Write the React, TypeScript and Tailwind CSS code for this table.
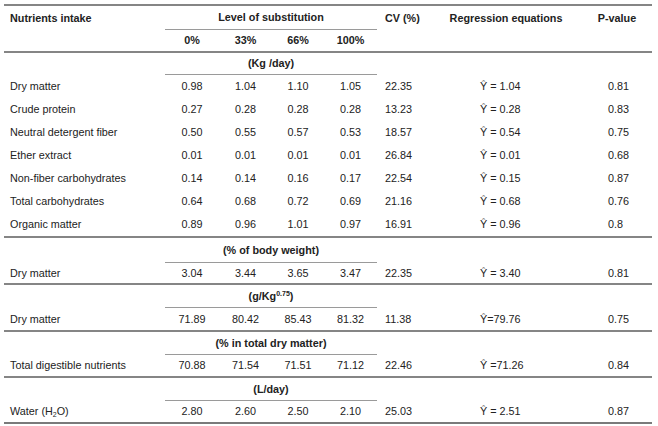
import React from "react";

const font = { fontFamily: '"Liberation Sans", Arial, sans-serif' };

type Row = [string | React.ReactNode, string, string, string, string, string, string, string];

const kgRows: Row[] = [
  ["Dry matter", "0.98", "1.04", "1.10", "1.05", "22.35", "Ŷ = 1.04", "0.81"],
  ["Crude protein", "0.27", "0.28", "0.28", "0.28", "13.23", "Ŷ = 0.28", "0.83"],
  ["Neutral detergent fiber", "0.50", "0.55", "0.57", "0.53", "18.57", "Ŷ = 0.54", "0.75"],
  ["Ether extract", "0.01", "0.01", "0.01", "0.01", "26.84", "Ŷ = 0.01", "0.68"],
  ["Non-fiber carbohydrates", "0.14", "0.14", "0.16", "0.17", "22.54", "Ŷ = 0.15", "0.87"],
  ["Total carbohydrates", "0.64", "0.68", "0.72", "0.69", "21.16", "Ŷ = 0.68", "0.76"],
  ["Organic matter", "0.89", "0.96", "1.01", "0.97", "16.91", "Ŷ = 0.96", "0.8"],
];

function DataRow({ r, cls }: { r: Row; cls: string }) {
  return (
    <div className={`flex items-center ${cls}`}>
      <div className="w-[161px] pl-[6px]">{r[0]}</div>
      <div className="w-[54px] text-center">{r[1]}</div>
      <div className="w-[53px] text-center">{r[2]}</div>
      <div className="w-[52px] text-center">{r[3]}</div>
      <div className="w-[53px] text-center">{r[4]}</div>
      <div className="w-[53px] pl-[8px]">{r[5]}</div>
      <div className="w-[152px] pl-[50px] whitespace-pre">{r[6]}</div>
      <div className="w-[70px] pl-[26px]">{r[7]}</div>
    </div>
  );
}

function UnitRow({ children, cls }: { children: React.ReactNode; cls: string }) {
  return (
    <div className={`flex items-stretch ${cls}`}>
      <div className="w-[161px]" />
      <div className="w-[212px] flex items-center justify-center font-bold border-b border-[#9a9a9a]">
        {children}
      </div>
      <div className="flex-1" />
    </div>
  );
}

export default function App() {
  return (
    <div className="w-[658px] h-[426px] bg-white px-[4px] pt-[4px] text-[10.8px] leading-none text-[#222]" style={font}>
      <div className="w-[648px]">
        {/* header row 1 */}
        <div className="flex items-stretch h-[26px] border-t-2 border-[#858585] font-bold">
          <div className="w-[161px] pl-[6px] flex items-center">Nutrients intake</div>
          <div className="w-[212px] flex items-center justify-center border-b border-[#9a9a9a]">Level of substitution</div>
          <div className="w-[53px] pl-[8px] flex items-center">CV (%)</div>
          <div className="w-[152px] flex items-center justify-center">Regression equations</div>
          <div className="w-[70px] flex items-center justify-center">P-value</div>
        </div>
        {/* header row 2 */}
        <div className="flex items-center h-[23px] border-b-2 border-[#858585] font-bold">
          <div className="w-[161px]" />
          <div className="w-[54px] text-center">0%</div>
          <div className="w-[53px] text-center">33%</div>
          <div className="w-[52px] text-center">66%</div>
          <div className="w-[53px] text-center">100%</div>
        </div>
        <UnitRow cls="h-[22px]">(Kg /day)</UnitRow>
        {kgRows.map((r, i) => (
          <DataRow
            key={i}
            r={r}
            cls={i === kgRows.length - 1 ? "h-[25px] border-b-2 border-[#858585]" : "h-[23px]"}
          />
        ))}
        <UnitRow cls="h-[25px]">(% of body weight)</UnitRow>
        <DataRow
          r={["Dry matter", "3.04", "3.44", "3.65", "3.47", "22.35", "Ŷ = 3.40", "0.81"]}
          cls="h-[22px] border-b-2 border-[#858585]"
        />
        <UnitRow cls="h-[23px]">
          <span>
            (g/Kg<sup className="text-[7px] relative -top-[4px]">0.75</sup>)
          </span>
        </UnitRow>
        <DataRow
          r={["Dry matter", "71.89", "80.42", "85.43", "81.32", "11.38", "Ŷ=79.76", "0.75"]}
          cls="h-[24px] border-b-2 border-[#858585]"
        />
        <UnitRow cls="h-[23px]">(% in total dry matter)</UnitRow>
        <DataRow
          r={["Total digestible nutrients", "70.88", "71.54", "71.51", "71.12", "22.46", "Ŷ =71.26", "0.84"]}
          cls="h-[23px] border-b-2 border-[#858585]"
        />
        <UnitRow cls="h-[23px]">(L/day)</UnitRow>
        <DataRow
          r={[
            <span key="w">
              Water (H<sub className="text-[7px]">2</sub>O)
            </span>,
            "2.80",
            "2.60",
            "2.50",
            "2.10",
            "25.03",
            "Ŷ = 2.51",
            "0.87",
          ]}
          cls="h-[23px] border-b-2 border-[#7a7a7a]"
        />
      </div>
    </div>
  );
}
